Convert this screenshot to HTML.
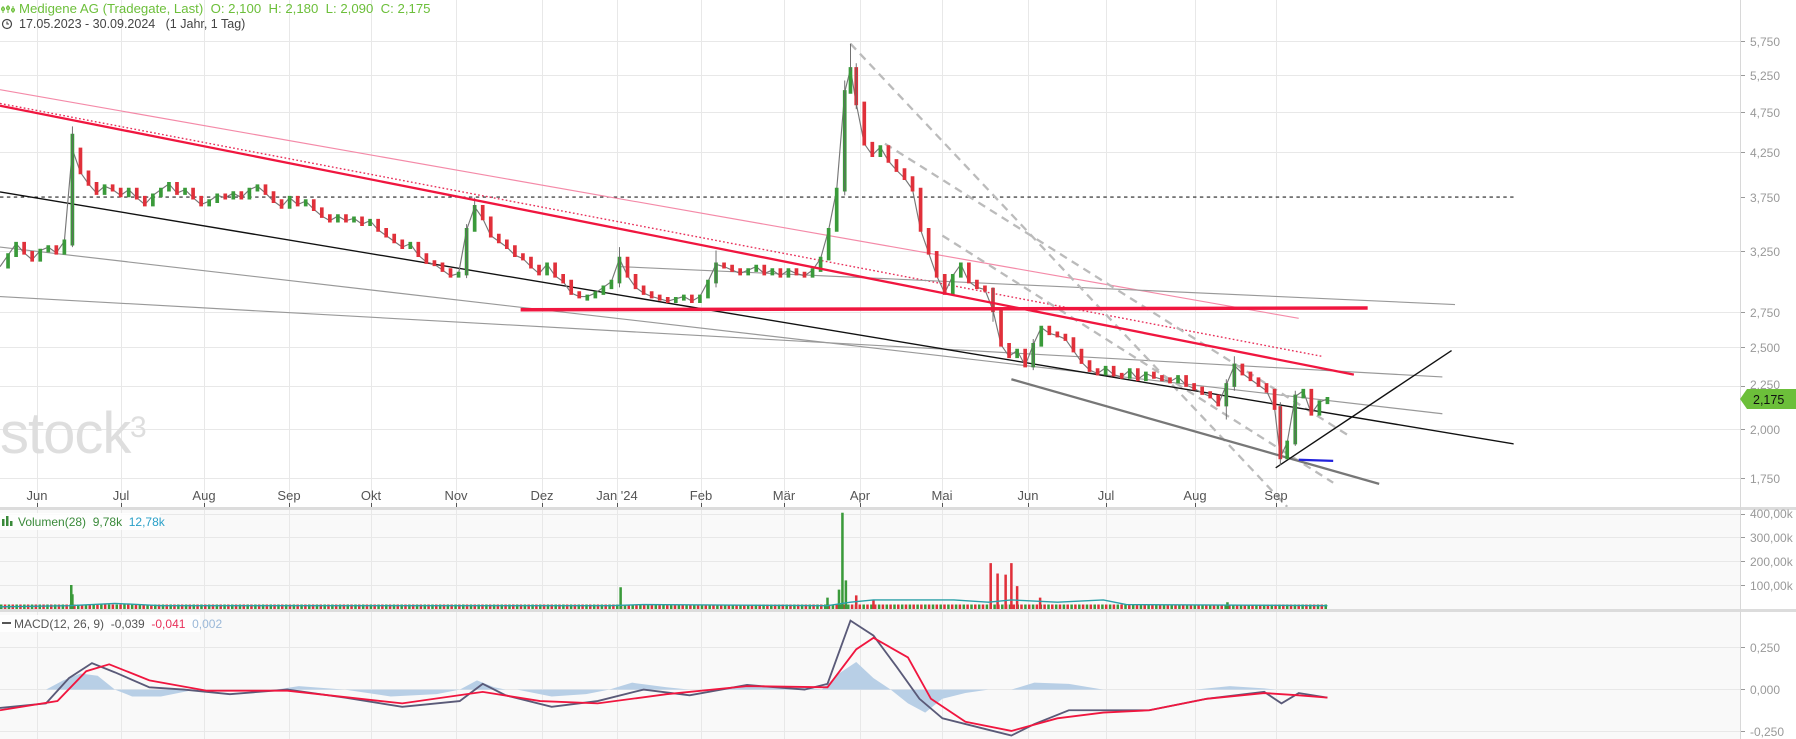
<!DOCTYPE html>
<html><head><meta charset="utf-8"><style>
html,body{margin:0;padding:0;background:#fff;overflow:hidden}
svg{display:block;font-family:"Liberation Sans",Arial,sans-serif}
</style></head><body>
<svg width="1796" height="739" viewBox="0 0 1796 739" xmlns="http://www.w3.org/2000/svg">
<rect width="1796" height="739" fill="#fff"/>
<rect x="0" y="510" width="1740" height="100" fill="#f9f9f9"/>
<rect x="0" y="612" width="1740" height="127" fill="#f9f9f9"/>
<g stroke="#e8e8e8" stroke-width="1">
<path d="M37.5 0V739M121.5 0V739M204.5 0V739M289.5 0V739M371.5 0V739M456.5 0V739M542.5 0V739M617.5 0V739M701.5 0V739M784.5 0V739M860.5 0V739M942.5 0V739M1028.5 0V739M1106.5 0V739M1195.5 0V739M1276.5 0V739"/>
<path d="M0 41.5H1740M0 75.5H1740M0 112.5H1740M0 152.5H1740M0 251.5H1740M0 312.5H1740M0 347.5H1740M0 386.5H1740M0 429.5H1740M0 478.5H1740M0 514.5H1740M0 537.5H1740M0 561.5H1740M0 585.5H1740M0 647.5H1740M0 689.5H1740M0 731.5H1740"/>
</g>
<text x="0" y="453" font-size="58" fill="#dedede" letter-spacing="-1">stock</text>
<text x="130" y="437" font-size="30" fill="#dedede">3</text>
<defs>
<clipPath id="cp"><rect x="0" y="0" width="1317" height="442"/></clipPath>
<clipPath id="cv"><rect x="0" y="446" width="1317" height="86"/></clipPath>
<clipPath id="cm"><rect x="0" y="534" width="1317" height="110"/></clipPath>
</defs>
<g transform="scale(1.1493)">
 <g clip-path="url(#cp)" fill="none">
  <line x1="0" y1="171.5" x2="1514" y2="171.5" stroke="#222" stroke-dasharray="3,3"/>
  <line x1="0" y1="78" x2="1130" y2="277" stroke="#f48aa8" stroke-width="1"/>
  <line x1="0" y1="90" x2="1150" y2="310" stroke="#e8305a" stroke-width="1.2" stroke-dasharray="1.5,2"/>
  <line x1="0" y1="215" x2="1255" y2="360" stroke="#999" stroke-width="1"/>
  <line x1="0" y1="258" x2="1255" y2="328" stroke="#999" stroke-width="1"/>
  <line x1="540" y1="232" x2="1266" y2="265" stroke="#999" stroke-width="1"/>
  <line x1="740" y1="38" x2="1120" y2="441" stroke="#bbb" stroke-width="2" stroke-dasharray="7,5"/>
  <line x1="770" y1="125" x2="1175" y2="380" stroke="#bbb" stroke-width="2" stroke-dasharray="7,5"/>
  <line x1="820" y1="205" x2="1160" y2="420" stroke="#bbb" stroke-width="2" stroke-dasharray="7,5"/>
  <line x1="880" y1="330" x2="1200" y2="421" stroke="#777" stroke-width="2"/>
  <line x1="0" y1="167" x2="1490" y2="415" stroke="#111" stroke-width="1.2"/>
  <line x1="1110" y1="407" x2="1263" y2="305" stroke="#111" stroke-width="1.2"/>
  <line x1="1130" y1="400" x2="1160" y2="401" stroke="#2222dd" stroke-width="2"/>
 </g>
 <g clip-path="url(#cp)" fill="none" stroke-width="3.2" stroke-linecap="square">
  <path stroke="#777" stroke-width="1" stroke-linecap="butt" d="M0 232L7 222L14 212L21 220L28 226L35 218L42 215L49 220L56 210L63 130L70 150L77 160L84 168L91 162L98 165L105 170L112 165L119 172L126 178L133 170L140 165L147 160L154 168L161 165L168 172L175 178L182 175L189 170L196 172L203 168L210 172L217 165L224 162L231 168L238 175L245 180L252 172L259 178L266 175L273 182L280 188L287 192L294 188L301 192L308 190L315 195L322 192L329 200L336 205L343 210L350 215L357 212L364 222L371 228L378 230L385 235L392 240L399 238L406 200L413 180L420 190L427 205L434 210L441 215L448 222L455 225L462 232L469 238L476 230L483 240L490 245L497 255L504 258L511 258L518 255L525 250L532 245L539 225L546 240L553 250L560 255L567 258L574 260L581 262L588 260L595 258L602 262L609 258L616 245L623 230L630 232L637 235L644 238L651 235L658 232L665 238L672 235L679 240L686 235L693 238L700 240L707 235L714 225L721 200L728 165L735 80L740 60L745 90L752 125L759 135L766 128L773 140L780 148L787 155L794 165L801 200L808 220L815 240L822 255L829 240L836 230L843 245L850 250L857 252L864 270L871 300L878 310L885 305L892 318L899 300L906 285L913 290L920 292L927 295L934 305L941 315L948 322L955 325L962 320L969 326L976 328L983 322L990 330L997 325L1004 328L1011 330L1018 332L1025 328L1032 335L1039 338L1046 342L1053 345L1060 352L1067 335L1074 318L1081 325L1088 330L1095 335L1102 340L1109 355L1114 398L1120 385L1127 345L1134 340L1141 360L1148 350L1155 347"/>
  <path stroke="#3a9a3a" d="M7 222V232M14 212V222M35 218V226M42 215V218M56 210V220M63 118V212M91 162V168M112 165V170M133 170V178M140 165V170M147 160V165M161 165V168M182 175V178M189 170V175M203 168V172M217 165V172M224 162V165M252 172V180M266 175V178M294 188V192M308 190V192M322 192V195M357 212V215M399 238V240M406 200V238M413 180V200M476 230V238M511 258V260M518 255V258M525 250V255M532 245V250M539 225V245M588 260V262M595 258V260M609 258V262M616 245V258M623 230V245M651 235V238M658 232V235M672 235V238M686 235V240M707 235V240M714 225V235M721 200V225M728 165V200M735 80V165M740 60V80M766 128V135M829 240V255M836 230V240M885 305V310M899 300V318M906 285V300M962 320V325M983 322V328M997 325V330M1025 328V332M1067 335V352M1074 318V335M1120 385V398M1127 345V385M1134 340V345M1148 350V360M1155 347V350"/>
  <path stroke="#e0303a" d="M21 212V220M28 220V226M49 215V220M70 130V150M77 150V160M84 160V168M98 162V165M105 165V170M119 165V172M126 172V178M154 160V168M168 165V172M175 172V178M196 170V172M210 168V172M231 162V168M238 168V175M245 175V180M259 172V178M273 175V182M280 182V188M287 188V192M301 188V192M315 190V195M329 192V200M336 200V205M343 205V210M350 210V215M364 212V222M371 222V228M378 228V230M385 230V235M392 235V240M420 180V190M427 190V205M434 205V210M441 210V215M448 215V222M455 222V225M462 225V232M469 232V238M483 230V240M490 240V245M497 245V255M504 255V258M546 225V240M553 240V250M560 250V255M567 255V258M574 258V260M581 260V262M602 258V262M630 230V232M637 232V235M644 235V238M665 232V238M679 235V240M693 235V238M700 238V240M745 60V90M752 90V125M759 125V135M773 128V140M780 140V148M787 148V155M794 155V165M801 165V200M808 200V220M815 220V240M822 240V255M843 230V245M850 245V250M857 250V252M864 252V270M871 270V300M878 300V310M892 305V318M913 285V290M920 290V292M927 292V295M934 295V305M941 305V315M948 315V322M955 322V325M969 320V326M976 326V328M990 322V330M1004 325V328M1011 328V330M1018 330V332M1032 328V335M1039 335V338M1046 338V342M1053 342V345M1060 345V352M1081 318V325M1088 325V330M1095 330V335M1102 335V340M1109 340V355M1114 355V398M1141 340V360"/>
  <path stroke="#666" stroke-width=".8" stroke-linecap="butt" d="M63 110V215M735 70V170M740 38V62M745 55V95M406 195V242M413 172V185M539 215V250M623 218V250M1114 350V405M1067 330V365M1127 340V388M864 250V280M899 295V322M1074 310V340"/>
 </g>
 <g clip-path="url(#cp)" fill="none">
  <line x1="0" y1="92" x2="1178" y2="326" stroke="#f0163f" stroke-width="2"/>
  <line x1="453" y1="269.5" x2="1190" y2="268" stroke="#f0163f" stroke-width="3"/>
 </g>
 <g clip-path="url(#cv)" fill="none" stroke-width="2.2">
  <path d="M0 528H1155" stroke="#3a9a3a" stroke-width="4" stroke-dasharray="2.2,4.5"/>
  <path d="M3.3 528H1155" stroke="#e0303a" stroke-width="4" stroke-dasharray="2.2,4.5"/>
  <path stroke="#3a9a3a" d="M62 530V509M63 530V517M540 530V511M733 530V446M730 530V513M736 530V505M720 530V520M1068 530V524"/>
  <path stroke="#e0303a" d="M862 530V490M868 530V499M875 530V500M880 530V490M885 530V510M905 530V520M745 530V518M760 530V522"/>
  <path stroke="#2aa0a8" stroke-width="1.2" d="M0 528L60 527L100 525L140 527L530 527L560 526L720 527L740 524L760 522L830 522L860 524L880 522L920 524L960 522L980 526L1155 527"/>
 </g>
 <g clip-path="url(#cm)">
  <path fill="#b8cfe6" d="M40 600L55 592L70 586L85 588L100 600L115 606L140 606L170 600ZM240 600L260 597L300 600ZM300 600L340 606L380 604L400 600ZM400 600L415 592L430 598L440 600ZM450 600L480 606L510 604L530 600ZM530 600L550 594L580 598L600 600ZM620 600L650 597L700 598L715 600ZM715 600L730 586L745 576L760 590L775 600ZM775 600L790 612L805 620L820 608L840 603L860 600ZM880 600L900 594L930 595L960 600ZM1040 600L1070 597L1100 599L1110 600Z"/>
  <path fill="none" stroke="#5a5a78" stroke-width="1.6" d="M0 616L40 612L60 590L80 577L100 585L130 598L160 600L200 604L250 600L300 607L350 615L400 610L420 595L440 605L480 615L520 610L560 600L600 605L650 596L700 600L720 595L740 540L760 553L780 580L800 608L820 625L860 635L880 640L900 630L930 618L1000 618L1050 608L1100 602L1115 612L1130 603L1155 607"/>
  <path fill="none" stroke="#f0163f" stroke-width="1.6" d="M0 618L50 610L75 584L95 578L130 592L180 601L250 601L350 612L420 602L470 610L520 612L580 604L650 597L720 598L745 565L760 555L790 572L810 608L840 628L880 636L920 625L960 620L1000 618L1050 608L1100 603L1130 605L1155 607"/>
 </g>
</g>
<rect x="0" y="507" width="1796" height="3" fill="#dcdcdc"/>
<rect x="0" y="609" width="1796" height="3" fill="#dcdcdc"/>
<line x1="1740.5" y1="0" x2="1740.5" y2="739" stroke="#d8d8d8"/>
<g font-size="13" fill="#555" text-anchor="middle">
<text x="37" y="500">Jun</text><text x="121" y="500">Jul</text><text x="204" y="500">Aug</text><text x="289" y="500">Sep</text><text x="371" y="500">Okt</text><text x="456" y="500">Nov</text><text x="542" y="500">Dez</text><text x="617" y="500">Jan '24</text><text x="701" y="500">Feb</text><text x="784" y="500">Mär</text><text x="860" y="500">Apr</text><text x="942" y="500">Mai</text><text x="1028" y="500">Jun</text><text x="1106" y="500">Jul</text><text x="1195" y="500">Aug</text><text x="1276" y="500">Sep</text>
</g>
<path stroke="#555" d="M37.5 503v4M121.5 503v4M204.5 503v4M289.5 503v4M371.5 503v4M456.5 503v4M542.5 503v4M617.5 503v4M701.5 503v4M784.5 503v4M860.5 503v4M942.5 503v4M1028.5 503v4M1106.5 503v4M1195.5 503v4M1276.5 503v4"/>
<path stroke="#999" d="M1741 41.5h4M1741 75.5h4M1741 112.5h4M1741 152.5h4M1741 197.5h4M1741 251.5h4M1741 312.5h4M1741 347.5h4M1741 386.5h4M1741 429.5h4M1741 478.5h4M1741 514.5h4M1741 537.5h4M1741 561.5h4M1741 585.5h4M1741 647.5h4M1741 689.5h4M1741 731.5h4"/>
<g font-size="12" fill="#999">
<text x="1750" y="46">5,750</text><text x="1750" y="80">5,250</text><text x="1750" y="117">4,750</text><text x="1750" y="157">4,250</text><text x="1750" y="202">3,750</text><text x="1750" y="256">3,250</text><text x="1750" y="317">2,750</text><text x="1750" y="352">2,500</text><text x="1750" y="389">2,250</text><text x="1750" y="434">2,000</text><text x="1750" y="483">1,750</text>
<text x="1750" y="518">400,00k</text><text x="1750" y="542">300,00k</text><text x="1750" y="566">200,00k</text><text x="1750" y="590">100,00k</text><text x="1750" y="652">0,250</text><text x="1750" y="694">0,000</text><text x="1750" y="736">-0,250</text>
</g>
<polygon points="1740,399 1747,389 1796,389 1796,409 1747,409" fill="#6cbf3a"/>
<text x="1753" y="404" font-size="12.5" fill="#111">2,175</text>
<g fill="#6cbf3a" stroke="#6cbf3a" stroke-width="1">
<line x1="3" y1="6" x2="3" y2="13"/><line x1="8" y1="5" x2="8" y2="13"/><line x1="13" y1="6" x2="13" y2="13"/>
<circle cx="3" cy="9" r="1.5" fill="none"/><circle cx="8" cy="8" r="1.5" fill="none"/><circle cx="13" cy="10" r="1.5" fill="none"/>
</g>
<text x="19" y="13" font-size="13.2" fill="#6cbf3a" xml:space="preserve">Medigene AG (Tradegate, Last)  O: 2,100  H: 2,180  L: 2,090  C: 2,175</text>
<circle cx="7" cy="24" r="4.5" fill="none" stroke="#444" stroke-width="1.2"/>
<path d="M7 21.5V24h2" fill="none" stroke="#444" stroke-width="1.1"/>
<text x="19" y="28" font-size="12.5" fill="#444" xml:space="preserve">17.05.2023 - 30.09.2024   (1 Jahr, 1 Tag)</text>
<rect x="0" y="513" width="160" height="17" fill="#fff" opacity=".8"/>
<rect x="2" y="519" width="2.5" height="7" fill="#3a8a3a"/><rect x="6" y="516" width="2.5" height="10" fill="#3a8a3a"/><rect x="10" y="521" width="2.5" height="5" fill="#3a8a3a"/>
<text x="18" y="526" font-size="12" fill="#3a8a3a" xml:space="preserve">Volumen(28)  9,78k  <tspan fill="#2aa0c8">12,78k</tspan></text>
<rect x="0" y="615" width="200" height="17" fill="#fff" opacity=".8"/>
<rect x="2" y="622" width="9" height="2" fill="#555"/>
<text x="14" y="628" font-size="12" fill="#555" xml:space="preserve">MACD(12, 26, 9)  -0,039  <tspan fill="#e8305a">-0,041</tspan>  <tspan fill="#9ab8d8">0,002</tspan></text>
</svg>
</body></html>
